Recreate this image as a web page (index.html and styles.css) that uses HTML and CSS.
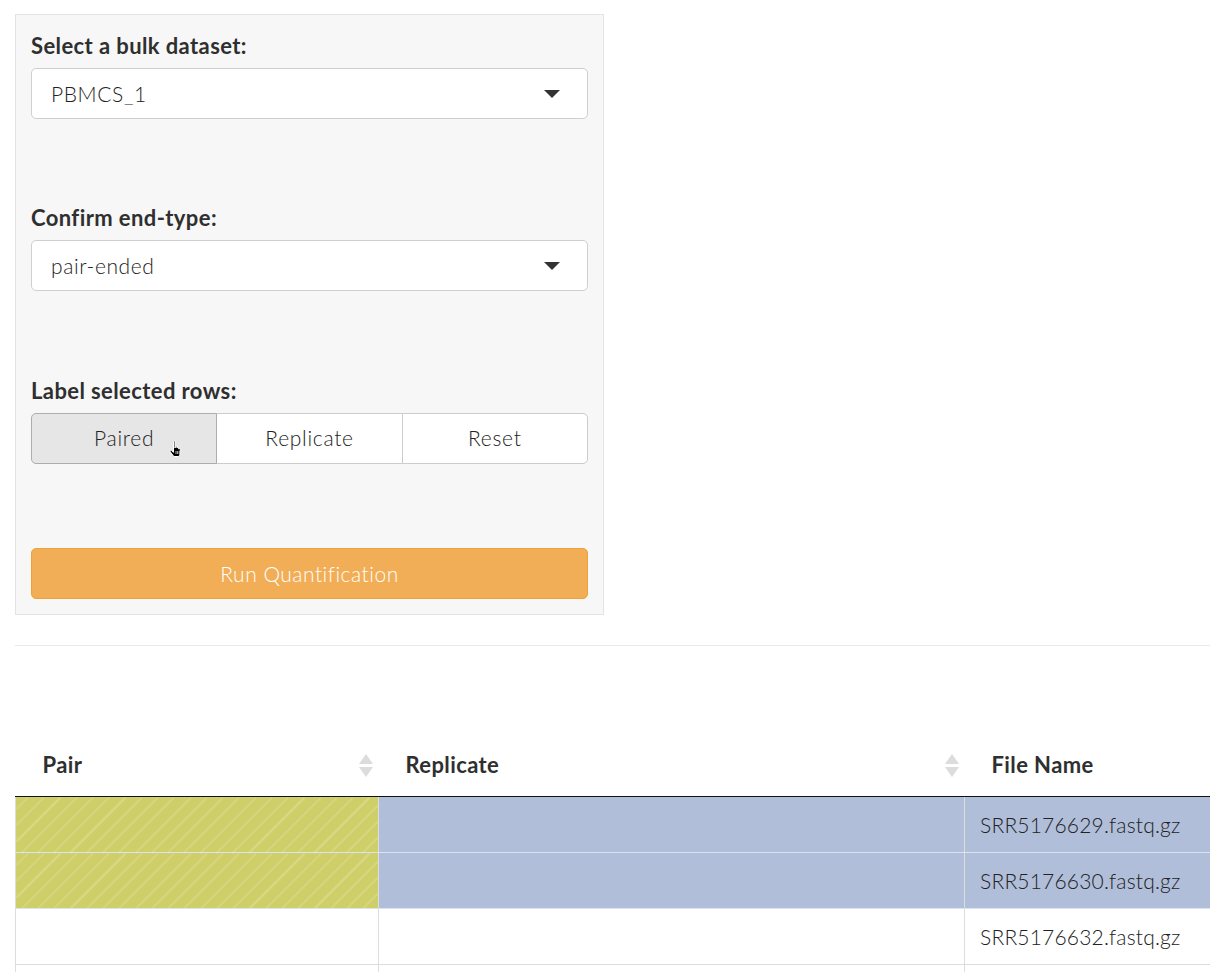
FILE: index.html
```html
<!DOCTYPE html>
<html>
<head>
<meta charset="utf-8">
<link rel="stylesheet" href="styles.css">
</head>
<body>
<div class="page">
  <div class="well">
    <div class="form-group">
      <label class="ctl-label">Select a bulk dataset:</label>
      <div class="select"><span>PBMCS_1</span><span class="caret"></span></div>
    </div>
    <div class="form-group">
      <label class="ctl-label">Confirm end-type:</label>
      <div class="select"><span>pair-ended</span><span class="caret"></span></div>
    </div>
    <div class="form-group last">
      <label class="ctl-label">Label selected rows:</label>
      <div class="btn-group">
        <div class="btn active"><span class="btn-text">Paired</span>
          <svg class="cursor" width="16" height="18" viewBox="0 0 16 18">
            <path d="M4.5 1.5 C4.5 0.8 6 0.8 6 1.5 L6 8 L6.5 6.8 C6.7 6.2 8 6.2 8 6.9 L8 8 C8.2 7.2 9.6 7.3 9.6 8 L9.6 8.8 C9.9 8.2 11.2 8.3 11.2 9 L11.2 13 C11.2 14.5 10.2 16 9.5 16.5 L5 16.5 C4.2 15.5 2 13 1.2 11.6 C0.6 10.6 1.8 9.8 2.6 10.6 L4.5 12.3 Z" fill="#000" stroke="#fff" stroke-width="1"/>
            <path d="M7 11 L7 14 M8.6 11 L8.6 14 M10.2 11 L10.2 14" stroke="#fff" stroke-width="0.7"/>
          </svg>
        </div>
        <div class="btn"><span class="btn-text">Replicate</span></div>
        <div class="btn"><span class="btn-text">Reset</span></div>
      </div>
    </div>
    <div class="run-btn">Run Quantification</div>
  </div>
  <hr class="divider">
  <table class="dt">
    <thead>
      <tr>
        <th class="c1"><span>Pair</span><span class="sort"><i class="up"></i><i class="down"></i></span></th>
        <th class="c2"><span>Replicate</span><span class="sort"><i class="up"></i><i class="down"></i></span></th>
        <th class="c3"><span>File Name</span></th>
      </tr>
    </thead>
    <tbody>
      <tr class="selected">
        <td class="paired"></td>
        <td></td>
        <td>SRR5176629.fastq.gz</td>
      </tr>
      <tr class="selected">
        <td class="paired"></td>
        <td></td>
        <td>SRR5176630.fastq.gz</td>
      </tr>
      <tr>
        <td></td>
        <td></td>
        <td>SRR5176632.fastq.gz</td>
      </tr>
      <tr>
        <td></td>
        <td></td>
        <td></td>
      </tr>
    </tbody>
  </table>
</div>
</body>
</html>
```

FILE: styles.css
```css
html, body {
  margin: 0;
  padding: 0;
  background: #fff;
  overflow: hidden;
}
body {
  font-family: "Lato", "Open Sans", sans-serif;
  color: #2a2a2a;
  font-size: 21px;
}
.page {
  padding: 14px 0 0 15px;
  width: 1600px;
}
.well {
  width: 557px;
  background: #f7f7f7;
  border: 1px solid #e3e3e3;
  padding: 19px 15px 15px 15px;
}
.form-group {
  margin-bottom: 87px;
}
.form-group.last {
  padding-top: 1px;
  margin-bottom: 84px;
}
.ctl-label {
  display: block;
  font-weight: 700;
  font-size: 22px;
  letter-spacing: 0.4px;
  line-height: 24px;
  margin-bottom: 10px;
  color: #2f2f2f;
}
.select {
  height: 49px;
  background: #fff;
  border: 1px solid #cfcfcf;
  border-radius: 5px;
  display: flex;
  align-items: center;
  justify-content: space-between;
  padding: 0 27px 0 19px;
  font-size: 21px;
  letter-spacing: 0.6px;
  font-weight: 300;
  color: #222;
}
.caret {
  width: 0;
  height: 0;
  border-left: 8px solid transparent;
  border-right: 8px solid transparent;
  border-top: 8px solid #333;
}
.btn-group {
  display: flex;
  height: 51px;
}
.btn {
  flex: 1;
  position: relative;
  display: flex;
  align-items: center;
  justify-content: center;
  background: #fff;
  border: 1px solid #ccc;
  margin-left: -1px;
  font-weight: 300;
  font-size: 21px;
  letter-spacing: 0.7px;
  color: #222;
}
.btn-text {
  margin-top: -3px;
}
.btn:first-child {
  margin-left: 0;
  border-radius: 5px 0 0 5px;
}
.btn:last-child {
  border-radius: 0 5px 5px 0;
}
.btn.active {
  background: #e6e6e6;
  border-color: #adadad;
  z-index: 1;
}
.cursor {
  position: absolute;
  left: 137px;
  top: 26px;
}
.run-btn {
  height: 49px;
  background: #f1ae56;
  border: 1px solid #eea236;
  border-radius: 5px;
  color: #fff;
  font-weight: 300;
  font-size: 21px;
  letter-spacing: 0.5px;
  display: flex;
  align-items: center;
  justify-content: center;
}
.divider {
  margin: 30px 0 0 0;
  border: 0;
  border-top: 1px solid #eaeaea;
  height: 0;
}
.dt {
  margin-top: 87px;
  border-collapse: collapse;
  table-layout: fixed;
  width: 1500px;
}
.dt th {
  text-align: left;
  font-weight: 700;
  font-size: 22px;
  letter-spacing: 0.4px;
  line-height: 23px;
  padding: 20px 6px 20px 27px;
  border-bottom: 1px solid #111;
  position: relative;
  color: #2f2f2f;
}
.dt th.c1 { width: 330px; }
.dt th.c2 { width: 553px; }
.dt th > span:first-child { display: inline-block; }
.sort {
  position: absolute;
  right: 6px;
  top: 21px;
  width: 14px;
  height: 23px;
  display: flex;
  flex-direction: column;
  justify-content: space-between;
  align-items: center;
}
.sort i {
  width: 0;
  height: 0;
  border-left: 7px solid transparent;
  border-right: 7px solid transparent;
}
.sort .up { border-bottom: 10px solid #dcdcdc; }
.sort .down { border-top: 10px solid #dcdcdc; }
.dt td {
  height: 56px;
  padding: 0 15px;
  border: 1px solid #ddd;
  border-top: 0;
  font-weight: 300;
  font-size: 21px;
  letter-spacing: 0.2px;
  color: #222;
  box-sizing: border-box;
}
.dt tr.selected td {
  background: #b0bed9;
  border-bottom-color: #dde2ec;
}
.dt tr.selected td.paired {
  background-color: #cfcf6a;
  background-image: repeating-linear-gradient(-45deg, transparent 0, transparent 10px, rgba(255,255,255,0.2) 10px, rgba(255,255,255,0.2) 11.5px);
}
```
